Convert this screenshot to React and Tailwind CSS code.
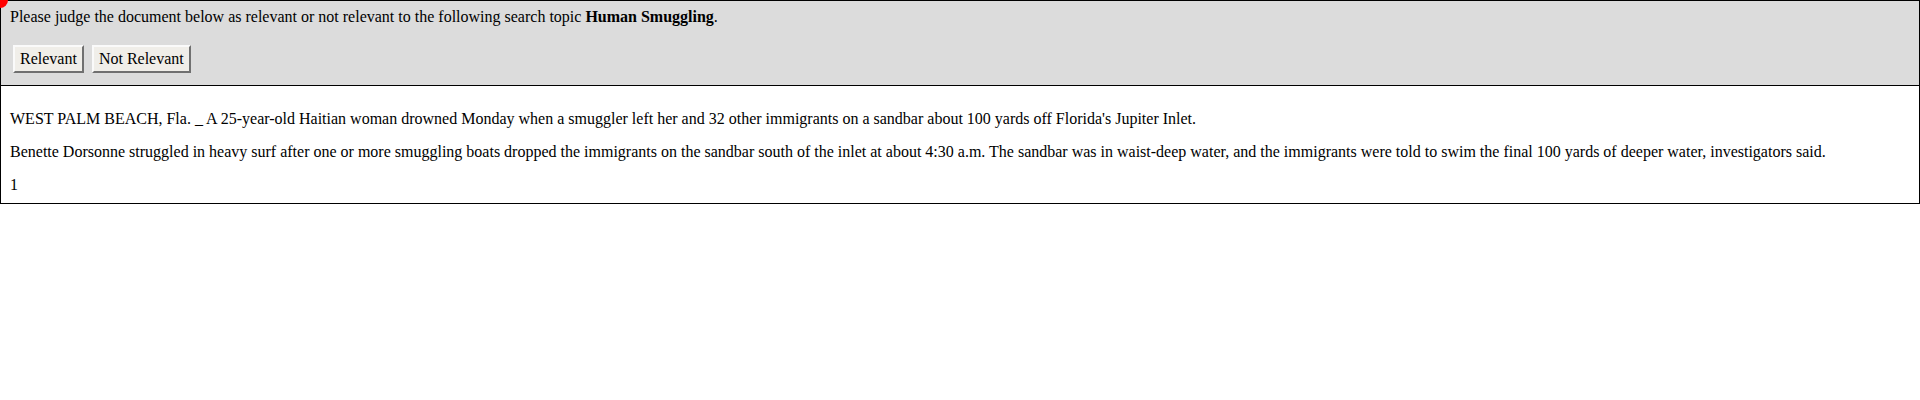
export default function App() {
  return (
    <div className="relative bg-white text-black text-[16px]" style={{ fontFamily: '"Liberation Serif", "Times New Roman", serif' }}>
      <div className="border border-black">
        <div className="bg-[#dcdcdc] border-b border-black h-[85px] px-[9px] pt-[7px]">
          <p className="leading-[18px]">
            Please judge the document below as relevant or not relevant to the following search topic <b>Human Smuggling</b>.
          </p>
          <div className="flex gap-[8px] mt-[19px] pl-[3px]">
            <button className="bg-[#f0eee9] border-2 border-t-[#fafafa] border-l-[#fafafa] border-b-[#707070] border-r-[#707070] px-[5px] h-[28px] leading-[18px]">
              Relevant
            </button>
            <button className="bg-[#f0eee9] border-2 border-t-[#fafafa] border-l-[#fafafa] border-b-[#707070] border-r-[#707070] px-[5px] h-[28px] leading-[18px]">
              Not Relevant
            </button>
          </div>
        </div>
        <div className="px-[9px] pt-[24px] pb-[9px] flex flex-col gap-[15px] leading-[18px]">
          <p>WEST PALM BEACH, Fla. _ A 25-year-old Haitian woman drowned Monday when a smuggler left her and 32 other immigrants on a sandbar about 100 yards off Florida's Jupiter Inlet.</p>
          <p>Benette Dorsonne struggled in heavy surf after one or more smuggling boats dropped the immigrants on the sandbar south of the inlet at about 4:30 a.m. The sandbar was in waist-deep water, and the immigrants were told to swim the final 100 yards of deeper water, investigators said.</p>
          <p>1</p>
        </div>
      </div>
      <div className="absolute z-10 -left-[8px] -top-[8px] w-[16px] h-[16px] rounded-full bg-[#ff0000]" />
    </div>
  );
}
